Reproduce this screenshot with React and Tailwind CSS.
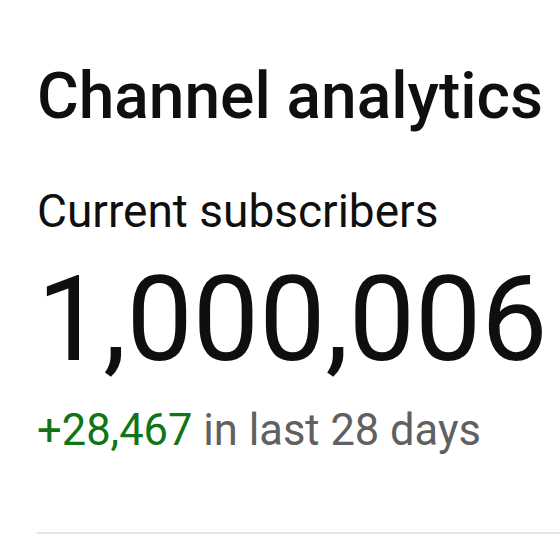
import React from 'react';

const App = () => {
  return (
    <div className="w-[560px] h-[560px] bg-white overflow-hidden font-['Roboto',sans-serif]">
      <div className="pl-[37px] pt-[59px] flex flex-col">
        {/* Header */}
        <h1 className="text-[64px] leading-[76px] font-medium text-[#0f0f0f] whitespace-nowrap">
          Channel analytics
        </h1>

        {/* Subscribers */}
        <p className="mt-[49px] text-[46px] leading-[54px] text-[#0f0f0f] whitespace-nowrap">
          Current subscribers
        </p>
        <p className="mt-[12px] text-[118px] leading-[140px] text-[#0f0f0f] whitespace-nowrap">
          1,000,006
        </p>
        <p className="mt-[16px] text-[43.5px] leading-[50px] text-[#606060] whitespace-nowrap">
          <span className="text-[#107516]">+28,467</span> in last 28 days
        </p>

        <div className="mt-[76px] h-[2px] bg-[#e5e5e5]" />
      </div>
    </div>
  );
};

export default App;
